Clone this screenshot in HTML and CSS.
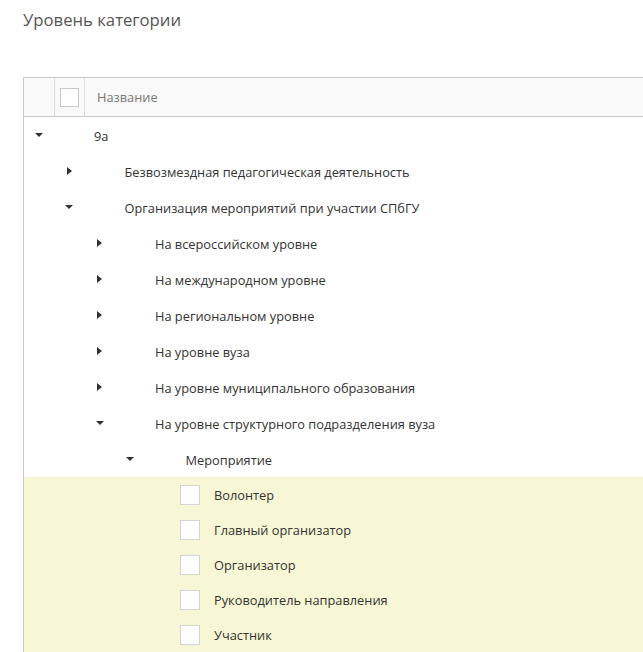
FILE: index.html
```html
<!DOCTYPE html>
<html lang="ru">
<head>
<meta charset="utf-8">
<title>Уровень категории</title>
<link rel="stylesheet" href="styles.css">
</head>
<body>
<div class="page">
  <h1 class="title">Уровень категории</h1>
  <div class="grid">
    <div class="head">
      <div class="hcell expand-col"></div>
      <div class="hcell select-col"><span class="cb"></span></div>
      <div class="hcell name-col">Название</div>
    </div>
    <div class="tbody">
      <div class="row lvl0"><span class="toggle"><span class="arrow down"></span></span><span class="label">9а</span></div>
      <div class="row lvl1"><span class="toggle"><span class="arrow right"></span></span><span class="label">Безвозмездная педагогическая деятельность</span></div>
      <div class="row lvl1"><span class="toggle"><span class="arrow down"></span></span><span class="label">Организация мероприятий при участии СПбГУ</span></div>
      <div class="row lvl2"><span class="toggle"><span class="arrow right"></span></span><span class="label">На всероссийском уровне</span></div>
      <div class="row lvl2"><span class="toggle"><span class="arrow right"></span></span><span class="label">На международном уровне</span></div>
      <div class="row lvl2"><span class="toggle"><span class="arrow right"></span></span><span class="label">На региональном уровне</span></div>
      <div class="row lvl2"><span class="toggle"><span class="arrow right"></span></span><span class="label">На уровне вуза</span></div>
      <div class="row lvl2"><span class="toggle"><span class="arrow right"></span></span><span class="label">На уровне муниципального образования</span></div>
      <div class="row lvl2"><span class="toggle"><span class="arrow down"></span></span><span class="label">На уровне структурного подразделения вуза</span></div>
      <div class="row lvl3"><span class="toggle"><span class="arrow down"></span></span><span class="label">Мероприятие</span></div>
      <div class="row leaf lvl4"><span class="cb"></span><span class="label">Волонтер</span></div>
      <div class="row leaf lvl4"><span class="cb"></span><span class="label">Главный организатор</span></div>
      <div class="row leaf lvl4"><span class="cb"></span><span class="label">Организатор</span></div>
      <div class="row leaf lvl4"><span class="cb"></span><span class="label">Руководитель направления</span></div>
      <div class="row leaf lvl4"><span class="cb"></span><span class="label">Участник</span></div>
    </div>
  </div>
</div>
</body>
</html>
```

FILE: styles.css
```css
html, body {
  margin: 0;
  padding: 0;
  background: #ffffff;
  overflow: hidden;
}

.page {
  font-family: "Open Sans", "Noto Sans", sans-serif;
  color: #333333;
  padding-top: 8px;
}

.title {
  margin: 0 0 0 23px;
  font-size: 16.7px;
  line-height: 24px;
  font-weight: 400;
  color: #555555;
}

.grid {
  margin: 45px 0 0 23px;
  border-left: 1px solid #c8c8c8;
}

.head {
  display: flex;
  height: 38px;
  background: #f9f9f9;
  border-top: 1px solid #c8c8c8;
  border-bottom: 1px solid #c8c8c8;
}

.hcell {
  display: flex;
  align-items: center;
  box-sizing: border-box;
}

.expand-col {
  width: 31px;
  border-right: 1px solid #dddddd;
}

.select-col {
  width: 30px;
  border-right: 1px solid #dddddd;
  padding-left: 5px;
}

.name-col {
  flex: 1;
  padding-left: 12px;
  font-size: 12.8px;
  color: #777777;
}

.cb {
  display: block;
  box-sizing: border-box;
  width: 20px;
  height: 20px;
  background: #ffffff;
  border: 1px solid #d4d4d4;
  flex: none;
}

.select-col .cb {
  width: 19px;
  height: 19px;
  border-color: #c8c8c8;
}

.row {
  display: flex;
  align-items: center;
  height: 36px;
  font-size: 12.8px;
  color: #333333;
}

.leaf {
  height: 35px;
  background: #f7f7d5;
}

.lvl0 { padding-left: 0; }
.lvl1 { padding-left: 30.5px; }
.lvl2 { padding-left: 61px; }
.lvl3 { padding-left: 91.5px; }
.lvl4 { padding-left: 122px; }

.toggle {
  width: 29px;
  height: 10px;
  display: flex;
  align-items: center;
  justify-content: center;
  flex: none;
}

.row .label {
  margin-left: 41px;
  white-space: nowrap;
  padding-top: 1px;
}

.leaf .cb {
  margin-left: 34px;
}

.leaf .label {
  margin-left: 14px;
}

.arrow {
  display: block;
  width: 0;
  height: 0;
}

.arrow.down {
  border-left: 4px solid transparent;
  border-right: 4px solid transparent;
  border-top: 4px solid #333333;
}

.arrow.right {
  border-top: 4px solid transparent;
  border-bottom: 4px solid transparent;
  border-left: 5px solid #333333;
}
```
